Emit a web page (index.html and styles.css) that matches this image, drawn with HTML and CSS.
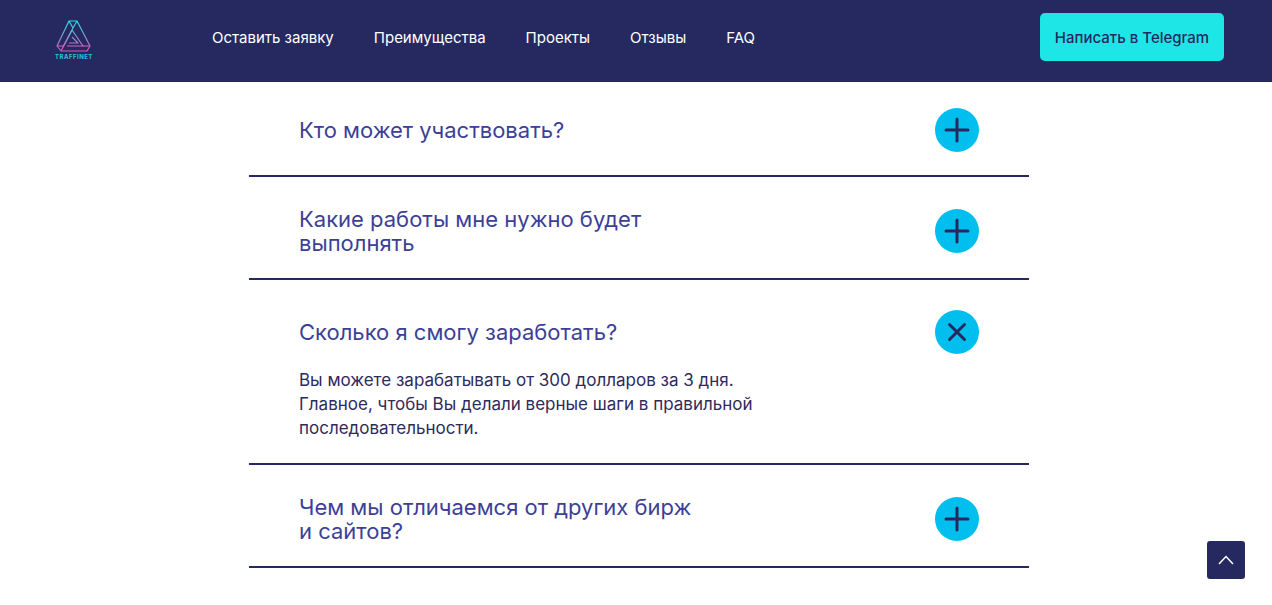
FILE: index.html
```html
<!DOCTYPE html>
<html lang="ru">
<head>
  <meta charset="UTF-8" />
  <meta name="viewport" content="width=device-width, initial-scale=1.0" />
  <title>Traffinet FAQ</title>
  <link rel="stylesheet" href="styles.css">
</head>
<body>

  <header class="topbar">
    <a class="logo" href="#">
      <svg class="logo-mark" width="38" height="33" viewBox="0 0 38 33" fill="none">
        <defs>
          <linearGradient id="logoGrad" gradientUnits="userSpaceOnUse" x1="0" y1="1" x2="0" y2="31">
            <stop offset="0" stop-color="#1fe3e6" />
            <stop offset="1" stop-color="#e84fb4" />
          </linearGradient>
        </defs>
        <g stroke="url(#logoGrad)" stroke-width="1.2" stroke-linejoin="round">
          <path d="M14 1 H22 L35 26 L32 31 H6 L2 26 Z" />
          <path d="M14 1 L18 8 L6 31 M22 1 L18 8" />
          <path d="M17 10 L28 26 H12 M17 10 L8 27" />
          <path d="M17 17 L23 23 H14 M2 26 H8 M35 26 H28" />
        </g>
      </svg>
      <span class="logo-text">TRAFFINET</span>
    </a>
    <nav class="menu">
      <a href="#">Оставить заявку</a>
      <a href="#">Преимущества</a>
      <a href="#">Проекты</a>
      <a href="#">Отзывы</a>
      <a href="#">FAQ</a>
    </nav>
    <a class="tg-btn" href="#">Написать в Telegram</a>
  </header>

  <!-- Вопросы -->
  <section class="faq">
    <div class="faq-item first">
      <div class="faq-head">
        <h3>Кто может участвовать?</h3>
        <span class="faq-icon">
          <svg width="44" height="44" viewBox="0 0 44 44"><path d="M22 11 V33 M11 22 H33" /></svg>
        </span>
      </div>
    </div>
    <div class="faq-item">
      <div class="faq-head">
        <h3>Какие работы мне нужно будет выполнять</h3>
        <span class="faq-icon">
          <svg width="44" height="44" viewBox="0 0 44 44"><path d="M22 11 V33 M11 22 H33" /></svg>
        </span>
      </div>
    </div>
    <div class="faq-item open">
      <div class="faq-head">
        <h3>Сколько я смогу заработать?</h3>
        <span class="faq-icon">
          <svg width="44" height="44" viewBox="0 0 44 44"><path d="M14.5 14.5 L29.5 29.5 M29.5 14.5 L14.5 29.5" /></svg>
        </span>
      </div>
      <p class="faq-answer">Вы можете зарабатывать от 300 долларов за 3 дня. Главное, чтобы Вы делали верные шаги в правильной последовательности.</p>
    </div>
    <div class="faq-item">
      <div class="faq-head">
        <h3>Чем мы отличаемся от других бирж и сайтов?</h3>
        <span class="faq-icon">
          <svg width="44" height="44" viewBox="0 0 44 44"><path d="M22 11 V33 M11 22 H33" /></svg>
        </span>
      </div>
    </div>
  </section>

  <a class="to-top" href="#">
    <svg width="16" height="10" viewBox="0 0 16 10" fill="none"><path d="M1 9 L8 1.5 L15 9" /></svg>
  </a>

</body>
</html>
```

FILE: styles.css
```css
html, body {
  height: 605px;
  overflow: hidden;
}

body {
  margin: 0;
  font-family: 'Inter', 'Open Sans', sans-serif;
  background-color: #fff;
}

a {
  text-decoration: none;
}

.topbar {
  height: 82px;
  padding: 0 48px 0 55px;
  display: flex;
  align-items: center;
  background-color: #25295f;
}

.logo {
  width: 157px;
  display: flex;
  flex-direction: column;
  align-items: flex-start;
  margin-top: -3px;
}

.logo-text {
  font-size: 6px;
  line-height: 6px;
  font-weight: 700;
  letter-spacing: 0.5px;
  color: #26c9d8;
  margin-top: 1px;
}

.menu {
  display: flex;
  gap: 40px;
  margin-top: -7px;
}

.menu a {
  font-size: 15px;
  color: #fff;
}

.tg-btn {
  margin-left: auto;
  margin-top: -8px;
  width: 184px;
  height: 48px;
  display: flex;
  align-items: center;
  justify-content: center;
  border-radius: 5px;
  background-color: #1fe6e6;
  color: #25295f;
  font-size: 15px;
  font-weight: 500;
}

.faq {
  width: 780px;
  margin-left: 249px;
}

.faq-item {
  padding: 30px 50px 23px;
  border-bottom: 2px solid #25295f;
}

.faq-item.first {
  padding-top: 26px;
}

.faq-head {
  display: flex;
  justify-content: space-between;
  align-items: center;
}

.faq-head h3 {
  margin: 0;
  width: 405px;
  font-size: 22px;
  line-height: 24px;
  font-weight: 400;
  color: #3d3f97;
}

.faq-icon {
  width: 44px;
  height: 44px;
  border-radius: 50%;
  background-color: #00bfee;
}

.faq-icon svg {
  display: block;
}

.faq-icon path {
  stroke: #25295f;
  stroke-width: 3;
  stroke-linecap: round;
  fill: none;
}

.faq-answer {
  margin: 14px 0 0;
  width: 470px;
  font-size: 17px;
  line-height: 24px;
  color: #2f2a5c;
}

.to-top {
  position: fixed;
  right: 27px;
  bottom: 26px;
  width: 38px;
  height: 38px;
  display: flex;
  align-items: center;
  justify-content: center;
  border-radius: 3px;
  background-color: #25295f;
}

.to-top path {
  stroke: #fff;
  stroke-width: 1.5;
}
```
